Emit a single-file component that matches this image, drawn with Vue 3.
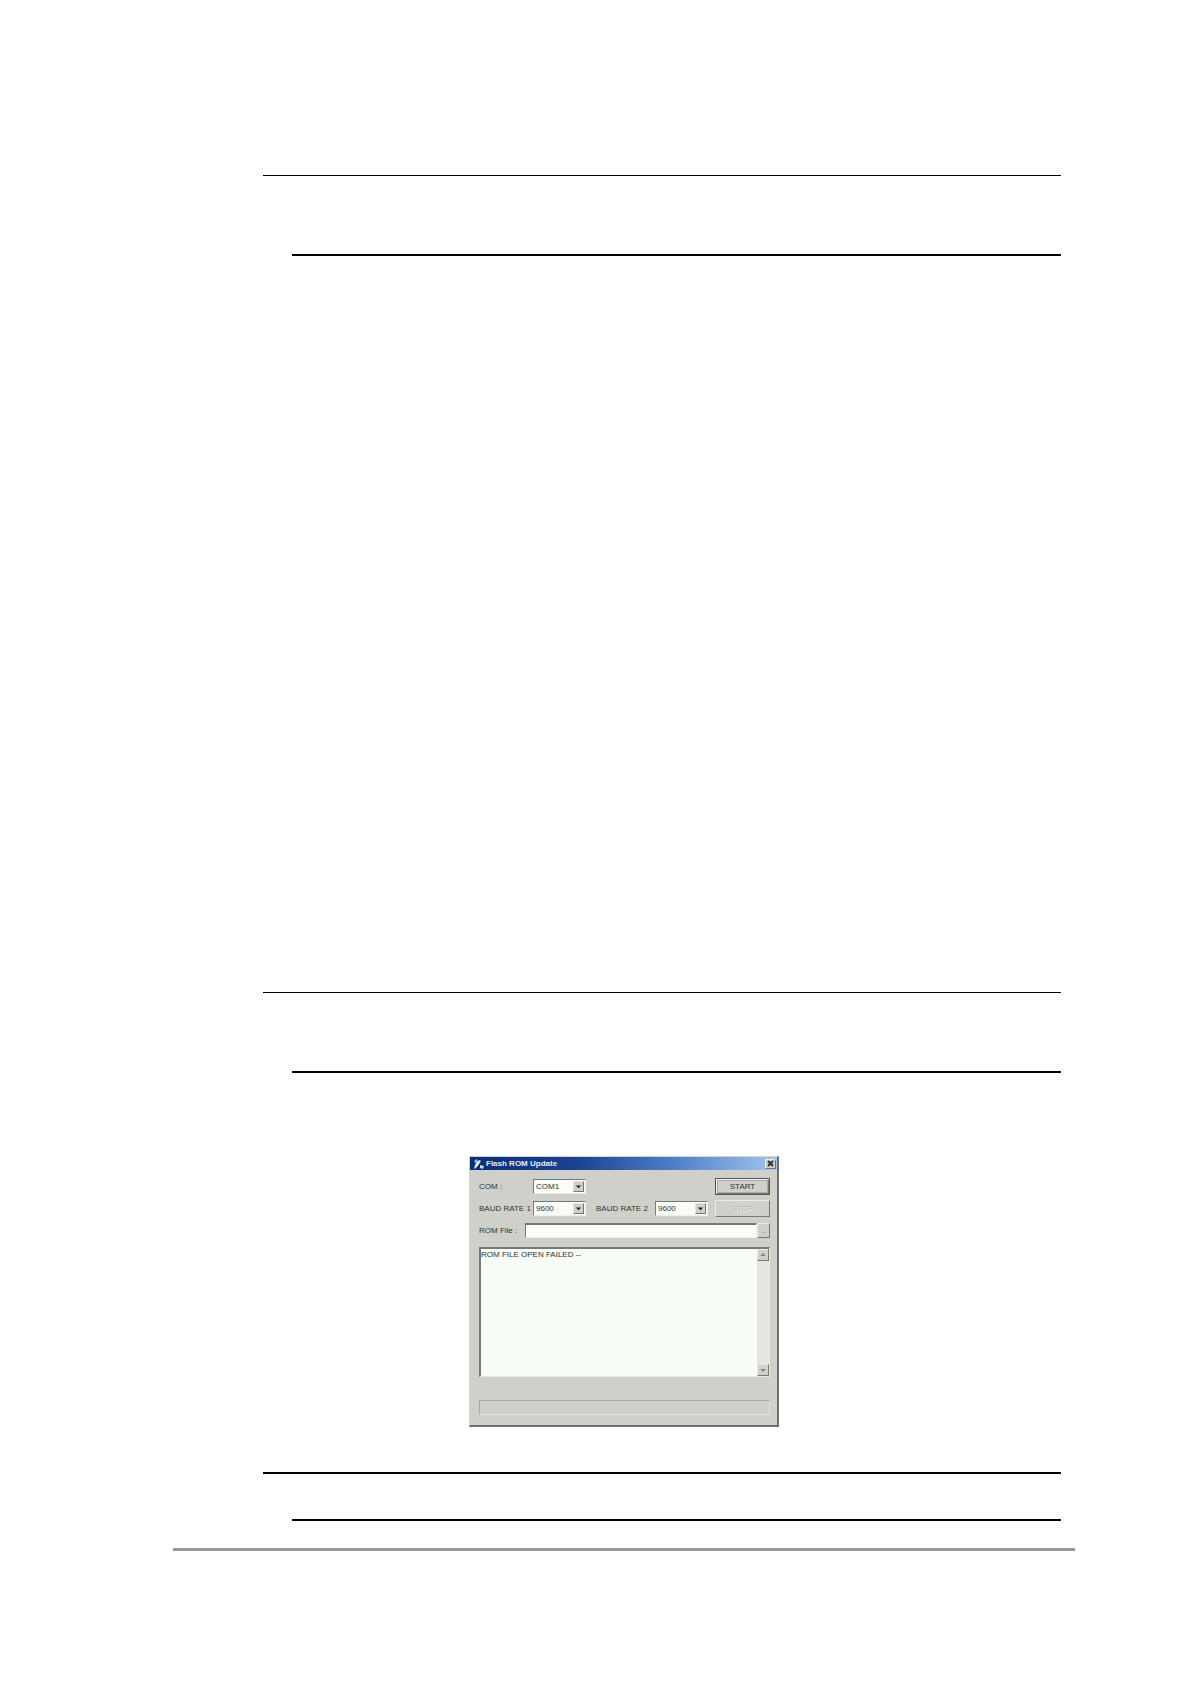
<script setup>
import { ref } from 'vue'

const port = ref('COM1')
const baud1 = ref('9600')
const baud2 = ref('9600')
const romFile = ref('')
const log = ref('ROM FILE OPEN FAILED --')
</script>

<template>
  <main class="page">
    <section class="note first"></section>
    <section class="note second"></section>

    <form class="dialog" @submit.prevent>
      <header class="titlebar">
        <svg class="app-icon" viewBox="0 0 13 12" aria-hidden="true">
          <path d="M2 3l3-2 1 3-2 2z" fill="#8cc0dc" />
          <path d="M7 2l2 1-4 6-3 2 1-4z" fill="#e6f2f8" />
          <path d="M8 7l4 1-1 3-3-1z" fill="#c9dcea" />
        </svg>
        <h1>Flash ROM Update</h1>
        <button type="button" class="close" aria-label="Close">
          <svg viewBox="0 0 7 7"><path d="M1 1l5 5M6 1l-5 5" stroke="#333" stroke-width="2" /></svg>
        </button>
      </header>

      <div class="body">
        <div class="row">
          <label class="lead" for="port">COM :</label>
          <span class="combo">
            <select id="port" v-model="port"><option>COM1</option></select>
            <svg class="arrow" viewBox="0 0 10 10" aria-hidden="true"><path d="M2 4h6l-3 3z" /></svg>
          </span>
          <button type="button" class="action start">START</button>
        </div>

        <div class="row">
          <label class="lead" for="baud1">BAUD RATE 1</label>
          <span class="combo">
            <select id="baud1" v-model="baud1"><option>9600</option></select>
            <svg class="arrow" viewBox="0 0 10 10" aria-hidden="true"><path d="M2 4h6l-3 3z" /></svg>
          </span>
          <label class="mid" for="baud2">BAUD RATE 2</label>
          <span class="combo">
            <select id="baud2" v-model="baud2"><option>9600</option></select>
            <svg class="arrow" viewBox="0 0 10 10" aria-hidden="true"><path d="M2 4h6l-3 3z" /></svg>
          </span>
          <button type="button" class="action" disabled>STOP</button>
        </div>

        <div class="row file">
          <label for="rom">ROM File :</label>
          <input id="rom" v-model="romFile" type="text" />
          <button type="button" class="browse" aria-label="Browse">..</button>
        </div>

        <div class="log">
          <textarea v-model="log" aria-label="Log" readonly></textarea>
          <div class="scroll">
            <button type="button" aria-label="Scroll up">
              <svg viewBox="0 0 10 10"><path d="M2 6h6l-3-3z" /></svg>
            </button>
            <button type="button" aria-label="Scroll down">
              <svg viewBox="0 0 10 10"><path d="M2 4h6l-3 3z" /></svg>
            </button>
          </div>
        </div>

        <div class="progress" role="progressbar" aria-label="Update progress"></div>
      </div>
    </form>

    <section class="note third"></section>
    <hr class="foot" />
  </main>
</template>

<style>
body {
  background: #fff;
}
</style>

<style scoped>
*,
*::after {
  box-sizing: border-box;
}

.page {
  padding: 175px 116px 133px 173px;
  font-family: "Liberation Sans", Arial, sans-serif;
}

.note {
  margin: 0 14px 0 90px;
  height: 81px;
  border-top: 1px solid #000;
}

.note::after {
  content: "";
  display: block;
  height: 100%;
  margin-left: 29px;
  border-bottom: 2px solid #000;
}

.second {
  margin-top: 736px;
}

.third {
  margin-top: 45px;
  height: 49px;
  border-top-width: 2px;
}

.foot {
  height: 3px;
  margin: 27px 0 0;
  border: 0;
  background: #999;
}

.dialog {
  width: 310px;
  margin: 83px auto 0;
  border: 1px solid #d4d4d0;
  border-right: 2px solid #6e6e6c;
  border-bottom: 2px solid #6e6e6c;
  background: #d0d0cb;
  color: #333;
  font-size: 8px;
  line-height: 10px;
}

.titlebar {
  display: flex;
  align-items: center;
  gap: 1px;
  height: 13px;
  padding: 0 1px 0 2px;
  background: linear-gradient(90deg, #0b2c7c, #1c4290 35%, #4c7cc8 65%, #a3c4ec);
}

.app-icon {
  width: 13px;
  height: 12px;
}

h1 {
  flex: 1;
  margin: 0;
  color: #e4ecf6;
  font-size: 8px;
  line-height: 12px;
}

button {
  padding: 0;
  border: 1px solid;
  border-color: #ecece6 #777 #777 #ecece6;
  border-radius: 0;
  background: #d0d0cb;
  color: #333;
  font: inherit;
}

.close {
  display: grid;
  place-items: center;
  width: 11px;
  height: 10px;
}

.close svg {
  width: 7px;
  height: 7px;
}

.body {
  padding: 8px 7px 10px 9px;
}

.row {
  display: flex;
  align-items: center;
  height: 17px;
  margin-bottom: 5px;
  white-space: nowrap;
}

.lead {
  width: 54px;
}

.mid {
  width: 59px;
  margin-left: 10px;
}

.combo {
  display: flex;
  align-items: center;
  width: 53px;
  height: 15px;
  padding-right: 1px;
  border: 1px solid;
  border-color: #777 #eee #eee #777;
  background: #fafcf8;
}

select {
  flex: 1;
  min-width: 0;
  height: 13px;
  padding: 0 0 0 2px;
  border: 0;
  appearance: none;
  background: none;
  color: #333;
  font: inherit;
}

.arrow {
  width: 11px;
  height: 11px;
  border: 1px solid;
  border-color: #e6e6e0 #777 #777 #e6e6e0;
  background: #d0d0cb;
  fill: #222;
}

.action {
  width: 55px;
  height: 17px;
  margin-left: auto;
}

.start {
  border-color: #555;
  box-shadow: inset 1px 1px #f0f0ea, inset -1px -1px #777, inset 0 0 0 2px #aaa;
}

.action:disabled {
  color: #b4b4ae;
  text-shadow: 1px 1px #eee;
}

.file {
  margin-bottom: 8px;
}

.file label {
  width: 46px;
}

input {
  flex: 1;
  min-width: 0;
  height: 15px;
  padding: 0 2px;
  border: 1px solid;
  border-color: #777 #eee #eee #777;
  border-top-width: 2px;
  background: #fafcf8;
  color: #333;
  font: inherit;
}

.browse {
  width: 13px;
  height: 15px;
  color: #777;
}

.log {
  display: flex;
  height: 130px;
  border: 1px solid;
  border-color: #777 #e8e8e2 #e8e8e2 #777;
  border-width: 2px 1px 1px 2px;
  background: #f7fdf6;
}

textarea {
  flex: 1;
  min-width: 0;
  padding: 1px 0;
  border: 0;
  overflow: hidden;
  resize: none;
  background: none;
  color: #333;
  font: inherit;
}

.scroll {
  display: flex;
  flex-direction: column;
  justify-content: space-between;
  width: 12px;
  background: #e2e5e0;
}

.scroll button {
  width: 12px;
  height: 12px;
  line-height: 0;
}

.scroll svg {
  width: 10px;
  height: 10px;
  fill: #888;
}

.progress {
  height: 15px;
  margin-top: 23px;
  border: 1px solid;
  border-color: #aaaaa4 #e0e0da #e0e0da #aaaaa4;
  background: #d1cec8;
}
</style>
